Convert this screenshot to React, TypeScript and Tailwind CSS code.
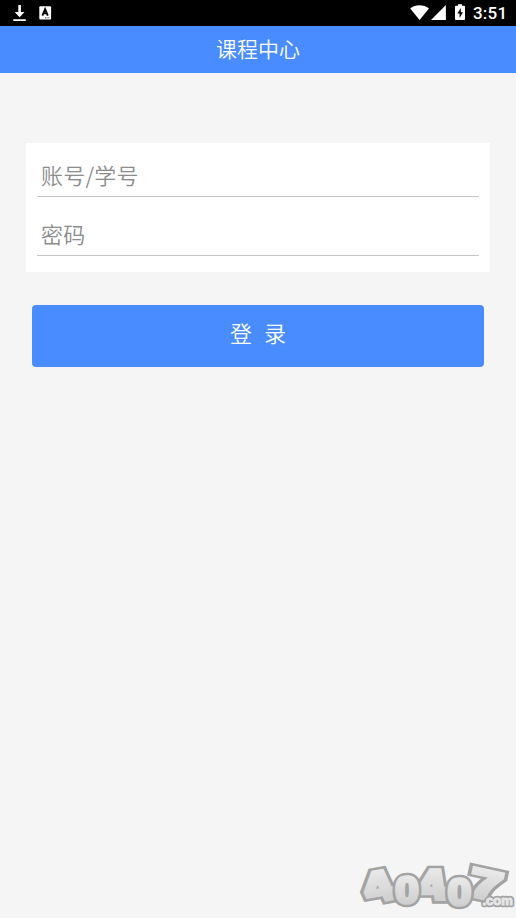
type DigitProps = { char: string; transform: string; round?: boolean };

function Digit({ char, transform, round }: DigitProps) {
  const join = round ? "round" : "miter";
  return (
    <g transform={transform} fontFamily="Liberation Sans" fontWeight="700" fontSize="40" textAnchor="middle" strokeLinejoin={join}>
      <text y="14" fill="#a3a3a3" stroke="#a3a3a3" strokeWidth="9">{char}</text>
      <text y="14" fill="url(#silver)" stroke="url(#silver)" strokeWidth="4">{char}</text>
    </g>
  );
}

function Watermark() {
  return (
    <svg className="block h-[63px] w-[166px]" viewBox="0 0 166 63">
      <defs>
        <linearGradient id="silver" gradientUnits="userSpaceOnUse" x1="0" y1="-15" x2="0" y2="16">
          <stop offset="0" stopColor="#e9e9e9" />
          <stop offset="1" stopColor="#cecece" />
        </linearGradient>
      </defs>
      <Digit char="4" transform="translate(28 31) rotate(-10) skewX(14) scale(1.32 1.04)" />
      <Digit char="4" transform="translate(82 29) skewX(9) scale(1.25 1.04)" />
      <Digit char="7" transform="translate(136 29.5) rotate(12) scale(1.45 1)" />
      <Digit char="0" round transform="translate(57 34.5) scale(1.03 .93)" />
      <Digit char="0" round transform="translate(109.5 37) scale(1.03 .93)" />
      <g fontFamily="Liberation Sans" fontWeight="700" fontSize="13" strokeLinejoin="round">
        <text x="132.5" y="50" fill="#a3a3a3" stroke="#a3a3a3" strokeWidth="4.5">.com</text>
        <text x="132.5" y="50" fill="#e6e6e6" stroke="#e6e6e6" strokeWidth="1">.com</text>
      </g>
    </svg>
  );
}

function StatusBar() {
  return (
    <div className="flex h-[26px] shrink-0 items-start bg-black text-white">
      <svg className="h-[26px] w-[60px]" viewBox="0 0 60 26" fill="#fff">
        <path d="M18.3 5h2.6v7h3.6l-4.9 5.2-4.9-5.2h3.6zM13.3 19.2h12.4v1.9H13.3z" />
        <rect x="39.3" y="6.2" width="11.8" height="13.2" rx="1" />
        <path d="M42.4 15.6l2.7-6.4 2.7 6.4M43.2 13.4h3.8" stroke="#000" strokeWidth="1.9" fill="none" />
        <path d="M45 17.8h5" stroke="#555" strokeWidth="1" strokeDasharray="1 .6" />
      </svg>
      <svg className="ml-auto h-[26px] w-[66px]" viewBox="407 0 66 26" fill="#fff">
        <path d="M410.2 8.6C415.8 4.2 423.3 4.2 429 8.6L419.6 20z" />
        <path d="M445.9 5v14.9H431z" />
        <path d="M458 4.3h4v1.5h2.1q.9 0 .9.9v12.4q0 .9-.9.9h-8.2q-.9 0-.9-.9V6.7q0-.9.9-.9h2.1z" />
        <path d="M460.8 8l-3.4 5.6h2.2V18l3.4-5.7h-2.2z" fill="#000" />
      </svg>
      <span className="mr-[9px] w-[34px] whitespace-nowrap font-['Roboto',sans-serif] text-[17px] font-medium leading-[27px] tracking-[0.2px]">3:51</span>
    </div>
  );
}

function Field({ label }: { label: string }) {
  return (
    <div className="h-[59px] border-b border-[#c4c4c4] pl-1 pt-[20px] text-[22px] leading-[32px] tracking-[0.2px] text-[#8c8c8c]">
      {label}
    </div>
  );
}

export default function App() {
  return (
    <div className="relative flex h-[918px] w-[516px] flex-col overflow-hidden bg-[#f5f5f5] font-['Noto_Sans_CJK_SC',sans-serif] font-[350]">
      <StatusBar />
      <header className="flex h-[47px] shrink-0 items-center justify-center bg-[#488cff] pb-[2px] text-[21px] leading-[31px] text-white">
        课程中心
      </header>
      <main className="flex flex-col px-[26px] pt-[70px]">
        <section className="h-[129px] bg-white pl-[11px] pr-[11px]">
          <div className="-mt-[5px]">
            <Field label="账号/学号" />
            <Field label="密码" />
          </div>
        </section>
        <button className="mx-[6px] mt-[32.5px] flex h-[62px] items-center justify-center whitespace-pre rounded-[4px] bg-[#488cff] pb-[7px] text-[22px] leading-[32px] text-white">
          <span className="mr-3">登</span><span>录</span>
        </button>
      </main>
      <div className="absolute bottom-0 right-0">
        <Watermark />
      </div>
    </div>
  );
}
